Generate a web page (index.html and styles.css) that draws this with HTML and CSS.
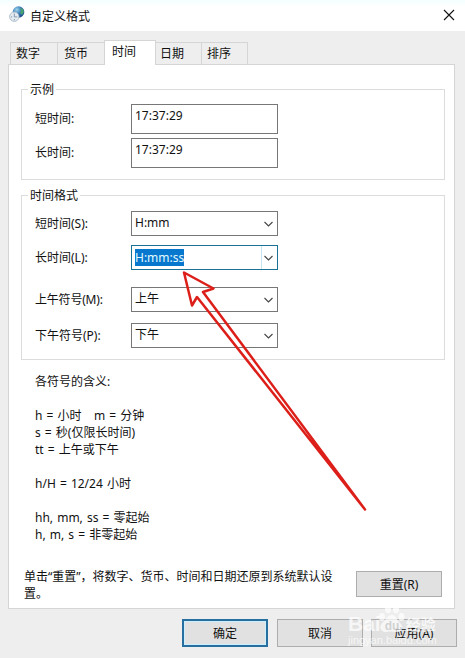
FILE: index.html
```
<!DOCTYPE html>
<html lang="zh">
<head>
  <meta charset="UTF-8" />
  <title>自定义格式</title>
  <meta name="viewport" content="width=device-width, initial-scale=1.0" />
  <link rel="stylesheet" href="styles.css">
</head>
<body>
  <div class="dialog">
    <header class="title-bar">
      <svg class="app-icon" width="16" height="17" viewBox="0 0 16 17">
        <defs>
          <radialGradient id="globe" cx="0.35" cy="0.3" r="0.8">
            <stop offset="0" stop-color="#9fd6ee" />
            <stop offset="0.5" stop-color="#3579b5" />
            <stop offset="1" stop-color="#123a7c" />
          </radialGradient>
        </defs>
        <circle cx="9.5" cy="6" r="5.8" fill="url(#globe)" />
        <path d="M11 2l3 1 1 3-2 3-2-2 1-2z" fill="#47a173" />
        <circle cx="5.3" cy="10.7" r="4.7" fill="#e4ebf1" stroke="#a9b8c5" stroke-width="0.9" />
        <path d="M5.3 7.5v3.4h3M2 10.9h1.2M5.3 13v1.3" fill="none" stroke="#7890a5" stroke-width="0.9" />
      </svg>
      <span class="title">自定义格式</span>
      <svg class="close" width="12" height="12" viewBox="0 0 12 12">
        <path d="M1 1l10 10M11 1L1 11" fill="none" stroke="#111" stroke-width="1.1" />
      </svg>
    </header>

    <nav class="tabs">
      <div class="tab tab-number">数字</div>
      <div class="tab">货币</div>
      <div class="tab active">时间</div>
      <div class="tab tab-date">日期</div>
      <div class="tab">排序</div>
    </nav>

    <main class="panel">
      <fieldset class="group sample">
        <legend>示例</legend>
        <div class="row"><span class="label">短时间:</span><div class="box">17:37:29</div></div>
        <div class="row"><span class="label">长时间:</span><div class="box">17:37:29</div></div>
      </fieldset>

      <fieldset class="group formats">
        <legend>时间格式</legend>
        <div class="row">
          <span class="label">短时间(S):</span>
          <div class="combo"><span>H:mm</span><svg class="arrow" width="9" height="6" viewBox="0 0 9 6"><path d="M.5 1l4 4 4-4" /></svg></div>
        </div>
        <div class="row">
          <span class="label">长时间(L):</span>
          <div class="combo focus"><span class="selected">H:mm:ss</span><svg class="arrow" width="9" height="6" viewBox="0 0 9 6"><path d="M.5 1l4 4 4-4" /></svg></div>
        </div>
        <div class="row">
          <span class="label narrow">上午符号(M):</span>
          <div class="combo"><span>上午</span><svg class="arrow" width="9" height="6" viewBox="0 0 9 6"><path d="M.5 1l4 4 4-4" /></svg></div>
        </div>
        <div class="row">
          <span class="label">下午符号(P):</span>
          <div class="combo"><span>下午</span><svg class="arrow" width="9" height="6" viewBox="0 0 9 6"><path d="M.5 1l4 4 4-4" /></svg></div>
        </div>
      </fieldset>

      <div class="legend-text">各符号的含义:

h = 小时   m = 分钟
s = 秒(仅限长时间)
tt = 上午或下午

h/H = 12/24 小时

hh, mm, ss = 零起始
h, m, s = 非零起始</div>

      <div class="reset-row">
        <p>单击“重置”，将数字、货币、时间和日期还原到系统默认设<br>置。</p>
        <button class="btn reset">重置(R)</button>
      </div>
    </main>

    <footer class="actions">
      <button class="btn primary">确定</button>
      <button class="btn">取消</button>
      <button class="btn">应用(A)</button>
    </footer>

    <!-- red pointer arrow -->
    <svg class="pointer" width="196" height="246" viewBox="0 0 196 246">
      <path d="M4 3.500l29.500 16-10.500 3.500L185 240.500 17 28 12 36.500z" />
    </svg>

    <div class="watermark">
      <div class="mark">
        <span class="mark-en">Bai</span>
        <svg width="27" height="29" viewBox="0 0 27 29">
          <ellipse cx="4" cy="13" rx="3" ry="4" />
          <ellipse cx="10" cy="5" rx="3" ry="4.2" />
          <ellipse cx="18" cy="5" rx="3" ry="4.2" />
          <ellipse cx="23.5" cy="13" rx="3" ry="4" />
          <path d="M14 11c4 0 4 4 8 8 5 5 1 9-3 9-3 0-7-1-10 0-5 1-9-4-5-9 4-3 5-8 10-8z" />
          <text x="14" y="26" text-anchor="middle">du</text>
        </svg>
        <span class="mark-cn">经验</span>
      </div>
      <div class="mark-url">jingyan.baidu.com</div>
    </div>
  </div>
</body>
</html>
```
FILE: styles.css
```
* {
  box-sizing: border-box;
}

body {
  margin: 0;
  font-family: "Noto Sans", "Noto Sans CJK SC", sans-serif;
  font-size: 12px;
  line-height: 17px;
  color: #111;
}

.dialog {
  position: relative;
  width: 465px;
  height: 658px;
  background: #eee;
  overflow: hidden;
}

.title-bar {
  display: flex;
  align-items: center;
  height: 31px;
  padding: 0 10px 0 9px;
  background: linear-gradient(#f4ffff, #fff 7px);
}

.title {
  flex: 1;
  margin: 1px 0 0 5px;
}

.app-icon {
  margin-top: -2px;
}

.close {
  margin-top: -1px;
}

.tabs {
  display: flex;
  align-items: flex-end;
  height: 33px;
  padding-left: 10px;
}

.tab {
  width: 47px;
  height: 22px;
  padding: 2px 0 0 6px;
  border: 1px solid #d5d5d5;
  border-width: 1px 1px 0 0;
}

.tab-number {
  width: 48px;
  padding-left: 5px;
  border-left-width: 1px;
}

.tab-date {
  width: 46px;
  padding-left: 4px;
}

.tab:last-child {
  width: 46px;
  padding-left: 5px;
}

.tab.active {
  position: relative;
  width: 52px;
  height: 25px;
  margin: 0 0 -1px -1px;
  padding: 2px 0 0 7px;
  border-left-width: 1px;
  background: #fff;
}

.panel {
  width: 447px;
  height: 545px;
  margin-left: 8px;
  padding: 16px 9px 0 12px;
  border: 1px solid #d5d5d5;
  background: #fff;
}

.group {
  margin: 0;
  padding: 0 0 0 13px;
  border: 1px solid #dcdcdc;
}

.group legend {
  height: 17px;
  margin-left: -7px;
  padding: 0 2px;
}

.sample {
  height: 99px;
}

.formats {
  height: 173px;
  margin-top: 7px;
}

.row {
  display: flex;
}

.label {
  width: 96px;
}

.label.narrow {
  letter-spacing: -0.2px;
}

.box,
.combo {
  width: 147px;
  border: 1px solid #777;
  padding-left: 3px;
  background: #fff;
}

.box {
  height: 30px;
  padding-top: 2px;
}

.sample .row {
  align-items: center;
  height: 30px;
  margin-top: 4px;
}

.sample .row:nth-of-type(1) {
  margin-top: 6px;
}

.sample .label {
  padding-bottom: 2px;
}

.combo {
  position: relative;
  display: flex;
  align-items: center;
  justify-content: space-between;
  height: 25px;
  padding-right: 4px;
}

.combo span {
  margin-top: -2px;
}

.arrow {
  fill: none;
  stroke: #444;
  stroke-width: 1.1;
}

.combo.focus {
  border-color: #1a7396;
}

.combo.focus::after {
  content: "";
  position: absolute;
  right: 15px;
  top: 0;
  bottom: 0;
  border-left: 1px solid #c5e4f0;
}

.combo .selected {
  margin-top: -1px;
  background: #0877ce;
  color: #e2fbff;
}

.formats .row {
  align-items: center;
  height: 25px;
}

.formats .row:nth-of-type(1) {
  margin-top: 7px;
}

.formats .row:nth-of-type(2) {
  margin-top: 9px;
}

.formats .row:nth-of-type(3) {
  margin-top: 17px;
}

.formats .row:nth-of-type(4) {
  margin-top: 11px;
}

.legend-text {
  margin: 13px 0 0 14px;
  white-space: pre;
  word-spacing: 1px;
}

.reset-row {
  display: flex;
  justify-content: space-between;
  margin-top: 25px;
  padding-right: 3px;
}

.reset-row p {
  margin: 0 0 0 3px;
  white-space: nowrap;
}

.btn {
  width: 86px;
  height: 28px;
  padding: 0;
  border: 1px solid #adadad;
  background: #e1e1e1;
  color: #111;
  font: inherit;
}

.btn.reset {
  height: 26px;
  margin-top: 3px;
}

.btn.primary {
  margin-right: 1px;
  border: 2px solid #266f9e;
  box-shadow: inset 0 0 0 1px #ccefff;
}

.actions {
  display: flex;
  justify-content: flex-end;
  gap: 8px;
  padding: 10px 8px 0 0;
}

.pointer {
  position: absolute;
  left: 180px;
  top: 269px;
  fill: none;
  stroke: #dd1f1a;
  stroke-width: 2.5;
  stroke-linejoin: round;
}

.watermark {
  position: absolute;
  left: 348px;
  top: 604px;
  width: 90px;
  color: #fff;
  opacity: 0.72;
  pointer-events: none;
}

.mark {
  display: flex;
  align-items: flex-end;
  height: 29px;
}

.mark svg {
  flex: none;
  margin: 0 1px 0 -3px;
  fill: #fff;
}

.mark text {
  font: bold 12px "Liberation Sans", sans-serif;
  fill: #ccc;
}

.mark-en {
  font: bold 21px/19px "Liberation Sans", sans-serif;
}

.mark-cn {
  font-size: 15px;
  font-weight: bold;
  line-height: 17px;
  white-space: nowrap;
}

.mark-url {
  font: 11px/14px "Liberation Sans", sans-serif;
  white-space: nowrap;
}
```
